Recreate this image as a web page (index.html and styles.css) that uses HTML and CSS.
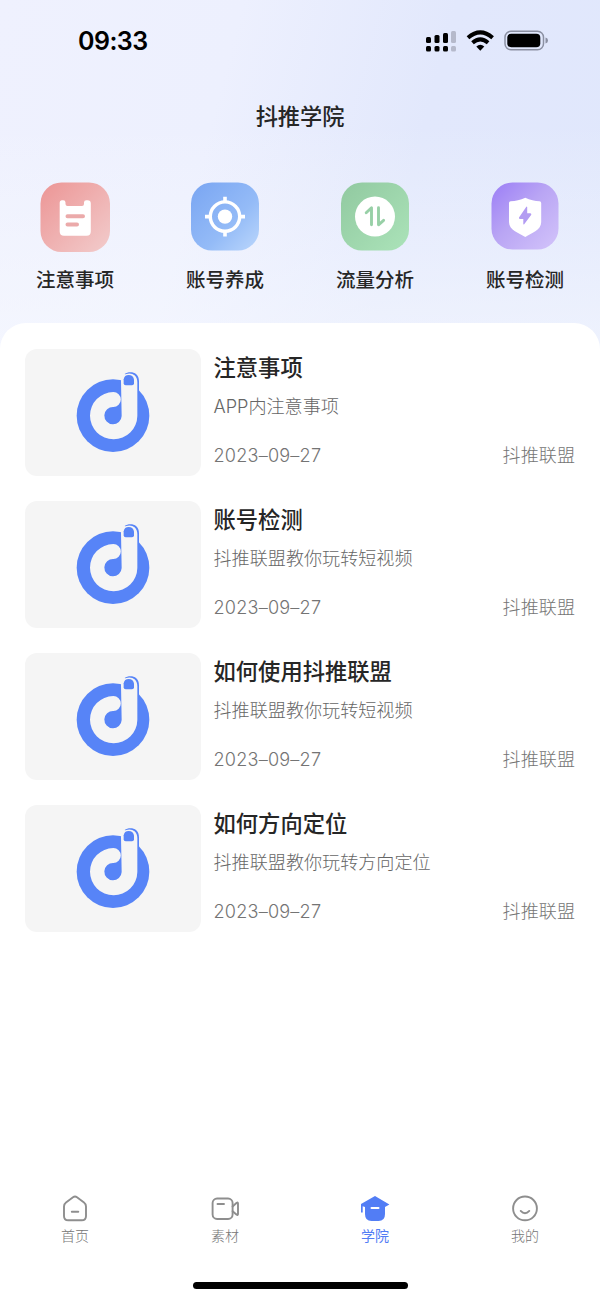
FILE: index.html
```html
<!DOCTYPE html>
<html lang="zh-CN">
<head>
<meta charset="utf-8">
<title>抖推学院</title>
<link rel="stylesheet" href="styles.css">
</head>
<body>
<svg width="0" height="0" class="defs">
  <symbol id="logo" viewBox="0 0 330 330">
    <circle cx="159" cy="167" r="109" fill="#5784f7"/>
    <path d="M194 42C207 33 237 34 237 64V98L224 90V62Z" fill="#5784f7"/>
    <path d="M183 64C183 34 232 30 232 66V168A71 71 0 1 1 160 96A22 22 0 0 1 160 141A26 26 0 1 0 185 168Z" fill="#f5f5f5"/>
    <path d="M191 58Q193 45 206 45Q219 45 222 58V70Q222 76 216 76H197Q191 76 191 70Z" fill="#5784f7"/>
  </symbol>
</svg>
<div class="app">
  <header class="hero">
    <div class="status">
      <span class="time">09:33</span>
      <svg class="indicators" width="124" height="24" viewBox="0 0 124 24">
        <g fill="#000"><rect x="1" y="8" width="5" height="6" rx="1.5"/><rect x="9.5" y="6" width="5" height="8" rx="1.5"/><rect x="18" y="4" width="5" height="10" rx="1.5"/><rect x="1" y="17" width="5" height="5.5" rx="1.5"/><rect x="9.500" y="17" width="5" height="5.500" rx="1.500"/><rect x="18" y="17" width="5" height="5.500" rx="1.500"/></g>
        <g fill="#b5b9cb"><rect x="26" y="2" width="5" height="12" rx="1.5"/><rect x="26" y="17" width="5" height="5.5" rx="1.500"/></g>
        <g fill="none" stroke="#000" stroke-width="4"><path d="M43 8.700Q55.300-2 67.600 8.700"/><path d="M47.500 13.700Q55.300 7 63.100 13.700"/></g>
        <path d="M51.300 17.400Q55.300 14.100 59.300 17.400L55.300 21.700Z"/>
        <rect x="80" y="2.300" width="38.500" height="18.400" rx="6" fill="none" stroke="#8b90a2" stroke-width="1.500"/>
        <rect x="82.300" y="4.800" width="33" height="13.400" rx="4"/>
        <path d="M120.500 8.500Q123 9.200 123 11.500T120.500 14.500Z" fill="#8b90a2"/>
      </svg>
    </div>
    <h1 class="page-title">抖推学院</h1>
    <nav class="shortcuts">
      <a class="shortcut">
        <svg viewBox="0 0 70 70"><defs><linearGradient id="red" x1="0" y1="0" x2="1" y2="1"><stop stop-color="#ec9595"/><stop offset="1" stop-color="#f2cccc"/></linearGradient></defs><rect x=".5" y=".5" width="69.500" height="69.500" rx="21" fill="url(#red)"/><path d="M22 18.200H23.200Q25.500 18.200 25.500 20.500V22Q25.500 24 27.500 24H42Q44 24 44 22V20.500Q44 18.200 46.300 18.200H47.500Q50.800 18.200 50.800 21.500V49.500Q50.800 53.700 46.600 53.700H24Q19.700 53.700 19.700 49.500V21Q19.700 18.200 22 18.200Z" fill="#fff"/><path d="M27.500 34.200H43M27.500 42.600H37" stroke="#ebaaaa" stroke-width="4" stroke-linecap="round"/></svg>
        <span>注意事项</span>
      </a>
      <a class="shortcut">
        <svg viewBox="0 0 70 70"><defs><linearGradient id="blue" x1="0" y1="0" x2="1" y2="1"><stop stop-color="#79a5f2"/><stop offset=".6" stop-color="#94bbf7"/><stop offset="1" stop-color="#bbd7fc"/></linearGradient></defs><rect x="1" y=".5" width="68" height="68" rx="21" fill="url(#blue)"/><g fill="none" stroke="#fff"><circle cx="35" cy="34.600" r="14.700" stroke-width="3.400"/><path stroke-width="3.600" d="M35 14.800v6M35 48.500v6M15 34.600h6M49 34.600h6"/></g><circle cx="35" cy="34.600" r="7.200" fill="#fff"/></svg>
        <span>账号养成</span>
      </a>
      <a class="shortcut">
        <svg viewBox="0 0 70 70"><defs><linearGradient id="green" x1="0" y1="0" x2="1" y2="1"><stop stop-color="#91c9a0"/><stop offset="1" stop-color="#abe3b9"/></linearGradient></defs><rect x="1" y=".5" width="68" height="68" rx="21" fill="url(#green)"/><circle cx="35" cy="34.600" r="20" fill="#fff"/><path d="M26.200 30.700L31.500 25.700V42.800M38.500 25.700V42.800L43.600 38.300" fill="none" stroke="#98d0a7" stroke-width="2.900" stroke-linecap="round" stroke-linejoin="round"/></svg>
        <span>流量分析</span>
      </a>
      <a class="shortcut">
        <svg viewBox="0 0 70 70"><defs><linearGradient id="purple" x1="0" y1="0" x2="1" y2="1"><stop stop-color="#9b7df6"/><stop offset=".45" stop-color="#b9a5f4"/><stop offset="1" stop-color="#d3c4fa"/></linearGradient></defs><rect x="1.500" y=".5" width="67" height="67" rx="21" fill="url(#purple)"/><path d="M35.300 15.700C40 18 45 19 49.500 19.300Q51.200 19.500 51.200 21V40C51.200 48 42 51 35.300 55C28.500 51 19 48 19 40V21Q19 19.500 20.700 19.300C25.500 19 30.500 18 35.300 15.700Z" fill="#fff"/><path d="M36.500 24.600L29 35.600Q28.500 37 30 37H33.300V42.300L34 42.500L41.300 32.800Q41.500 31.300 40.300 31.300H37.200V25Z" fill="#b39cf2"/></svg>
        <span>账号检测</span>
      </a>
    </nav>
  </header>
  <main class="sheet">
    <article class="card"><div class="thumb"><svg viewBox="0 0 330 330"><use href="#logo"/></svg></div><div class="body"><h2>注意事项</h2><p>APP内注意事项</p><div class="meta"><time>2023–09–27</time><span>抖推联盟</span></div></div></article>
    <article class="card"><div class="thumb"><svg viewBox="0 0 330 330"><use href="#logo"/></svg></div><div class="body"><h2>账号检测</h2><p>抖推联盟教你玩转短视频</p><div class="meta"><time>2023–09–27</time><span>抖推联盟</span></div></div></article>
    <article class="card"><div class="thumb"><svg viewBox="0 0 330 330"><use href="#logo"/></svg></div><div class="body"><h2>如何使用抖推联盟</h2><p>抖推联盟教你玩转短视频</p><div class="meta"><time>2023–09–27</time><span>抖推联盟</span></div></div></article>
    <article class="card"><div class="thumb"><svg viewBox="0 0 330 330"><use href="#logo"/></svg></div><div class="body"><h2>如何方向定位</h2><p>抖推联盟教你玩转方向定位</p><div class="meta"><time>2023–09–27</time><span>抖推联盟</span></div></div></article>
  </main>
  <footer class="tabbar">
    <nav class="tabs">
      <a class="tab"><svg viewBox="0 0 30 30"><path d="M13 3.300Q15 1.800 17 3.300L24 8.500Q26 10 26 12.500V22Q26 26.300 21.700 26.300H8.300Q4 26.300 4 22V12.500Q4 10 6 8.500ZM11.800 17.800H18.300"/></svg><span>首页</span></a>
      <a class="tab"><svg viewBox="0 0 30 30"><rect x="2.600" y="4.500" width="20" height="20.500" rx="4.500"/><path d="M7.500 10H14M22.600 12.500L26.700 8.800Q28 8 28 9.500V20Q28 21.500 26.700 20.700L22.600 17.200"/></svg><span>素材</span></a>
      <a class="tab active"><svg viewBox="0 0 30 30"><path d="M15 2L29.400 10.500L25 13V20Q25 27 18.500 27H11.500Q5 27 5 20V13L2.700 12.200V18.500H1V10Z"/><path class="dash" d="M11.500 14H18.500"/></svg><span>学院</span></a>
      <a class="tab"><svg viewBox="0 0 30 30"><circle cx="15" cy="14.400" r="11.900"/><path d="M10.700 16.900Q15 21.500 19.300 16.900"/></svg><span>我的</span></a>
    </nav>
    <div class="home-bar"></div>
  </footer>
</div>
</body>
</html>
```
FILE: styles.css
```css
* { box-sizing: border-box; }
body { margin: 0; background: #fff; font-family: "Noto Sans CJK SC", sans-serif; color: #262626; }
h1, h2, p { margin: 0; }
.defs { display: block; }
.app { width: 600px; height: 1300px; display: flex; flex-direction: column; overflow: hidden; }
.hero { height: 353px; flex: none; background: linear-gradient(180deg, rgba(248,250,255,0) 35%, rgba(248,250,255,.6) 100%), linear-gradient(105deg, #eff1fe 0%, #edf0fe 35%, #e2e8fc 66%, #e0e7fc 100%); }
.status { height: 80px; display: flex; justify-content: space-between; align-items: center; padding: 1px 51px 0 78px; }
.time { font: 600 25px/30px Inter, sans-serif; letter-spacing: -.55px; color: #000; }
.indicators { display: block; }
.page-title { height: 72px; font-size: 22.200px; line-height: 70px; font-weight: 500; text-align: center; }
.shortcuts { display: grid; grid-template-columns: repeat(4, 1fr); padding-top: 30px; }
.shortcut { display: flex; flex-direction: column; align-items: center; gap: 12px; }
.shortcut svg { width: 70px; height: 70px; }
.shortcut span { font-size: 19.500px; line-height: 30px; font-weight: 500; }
.sheet { flex: 1; margin-top: -30px; padding: 26px 25px 0; background: #fff; border-radius: 26px 26px 0 0; display: flex; flex-direction: column; gap: 25px; }
.card { display: flex; gap: 12.500px; height: 127px; }
.thumb { width: 176px; height: 127px; flex: none; border-radius: 12px; background: #f5f5f5; display: flex; justify-content: center; padding-top: 11px; }
.thumb svg { width: 110px; height: 110px; margin-left: 4px; }
.body { flex: 1; display: flex; flex-direction: column; }
.body h2 { font-size: 22.300px; line-height: 34px; font-weight: 500; }
.body p { margin-top: 9px; font-family: Inter, "Noto Sans CJK SC", sans-serif; font-size: 18.100px; line-height: 28px; font-weight: 300; color: #666; }
.meta { margin-top: 20px; display: flex; justify-content: space-between; font-size: 18.100px; line-height: 28px; font-weight: 300; color: #747474; }
.meta time { padding-top: 1px; font-family: Inter, sans-serif; letter-spacing: .2px; }
.tabbar { height: 110px; flex: none; display: flex; flex-direction: column; align-items: center; background: #fff; }
.tabs { width: 100%; height: 92px; display: grid; grid-template-columns: repeat(4, 1fr); padding-top: 4px; }
.tab { display: flex; flex-direction: column; align-items: center; gap: 1px; color: #8e8e8e; }
.tab svg { width: 30px; height: 30px; fill: none; stroke: currentColor; stroke-width: 1.900; stroke-linecap: round; stroke-linejoin: round; }
.tab span { font-size: 14px; line-height: 20px; font-weight: 300; color: #757575; }
.tab.active, .tab.active span { color: #527df5; }
.tab.active span { font-weight: 400; }
.tab.active svg { fill: currentColor; stroke: none; }
.tab.active .dash { stroke: #fff; stroke-width: 2; }
.home-bar { width: 215px; height: 7px; border-radius: 4px; background: #000; }
```
